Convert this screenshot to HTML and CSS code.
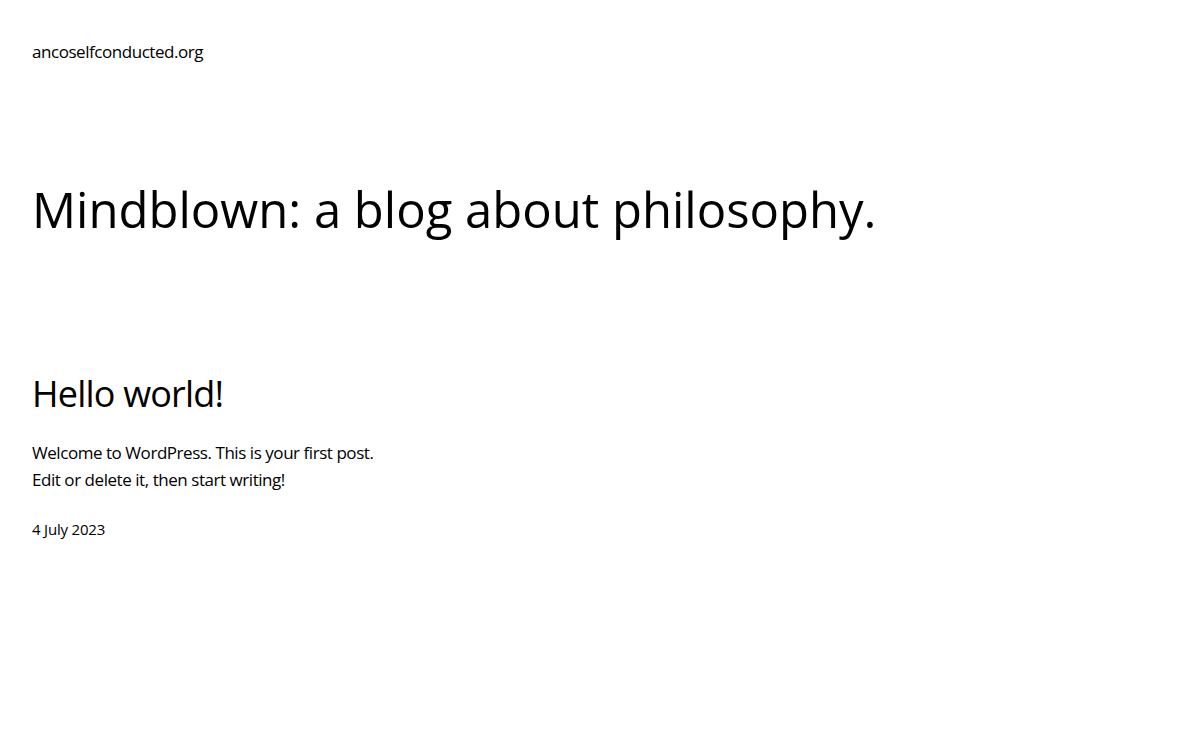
FILE: index.html
```html
<!DOCTYPE html>
<html lang="en">
<head>
<meta charset="utf-8">
<title>Mindblown: a blog about philosophy.</title>
<link rel="stylesheet" href="styles.css">
</head>
<body>
<header class="site-header">
  <p class="site-title">ancoselfconducted.org</p>
</header>
<main class="site-main">
  <h1 class="page-title">Mindblown: a blog about philosophy.</h1>
  <article class="post">
    <h2 class="post-title">Hello world!</h2>
    <div class="post-content">
      <p>Welcome to WordPress. This is your first post.<br>Edit or delete it, then start writing!</p>
    </div>
    <div class="post-date">4 July 2023</div>
  </article>
</main>
</body>
</html>
```

FILE: styles.css
```css
html, body {
  margin: 0;
  padding: 0;
  background: #ffffff;
  color: #000000;
}
body {
  font-family: "Open Sans", "Noto Sans", sans-serif;
  font-size: 17px;
  line-height: 1.6;
}
.site-header {
  padding: 38px 32px 0;
}
.site-title {
  margin: 0;
  font-size: 17px;
  line-height: 27px;
  letter-spacing: -0.45px;
}
.site-main {
  padding: 0 32px;
}
.page-title {
  margin: 115px 0 0;
  font-size: 49px;
  font-weight: 400;
  line-height: 58.8px;
  letter-spacing: 0;
}
.post-title {
  margin: 133px 0 0;
  font-size: 36px;
  font-weight: 400;
  line-height: 43.2px;
  letter-spacing: -0.8px;
}
.post-content p {
  margin: 24px 0 0;
  font-size: 17px;
  line-height: 27.2px;
  letter-spacing: -0.45px;
}
.post-date {
  margin: 24px 0 0;
  font-size: 15px;
  line-height: 24px;
  letter-spacing: -0.2px;
}
```
